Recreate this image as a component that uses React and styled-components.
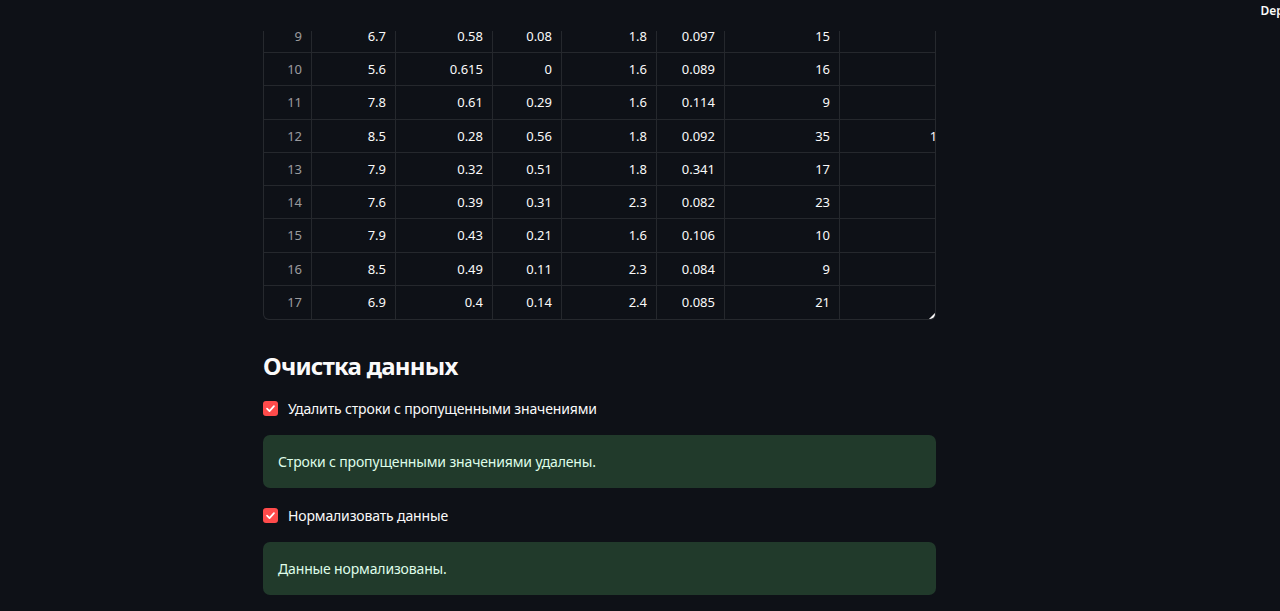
import React from "react";
import styled, { createGlobalStyle } from "styled-components";

const GlobalStyle = createGlobalStyle`
  html, body {
    margin: 0;
    padding: 0;
    background: #0e1117;
  }
  body {
    font-family: "Noto Sans", "Open Sans", sans-serif;
    color: #fafafa;
    overflow: hidden;
  }
`;

const columns = [48, 84, 97, 69, 95, 68, 115, 121];

const rows = [
  [9, "6.7", "0.58", "0.08", "1.8", "0.097", "15", "59"],
  [10, "5.6", "0.615", "0", "1.6", "0.089", "16", "59"],
  [11, "7.8", "0.61", "0.29", "1.6", "0.114", "9", "29"],
  [12, "8.5", "0.28", "0.56", "1.8", "0.092", "35", "103"],
  [13, "7.9", "0.32", "0.51", "1.8", "0.341", "17", "56"],
  [14, "7.6", "0.39", "0.31", "2.3", "0.082", "23", "71"],
  [15, "7.9", "0.43", "0.21", "1.6", "0.106", "10", "37"],
  [16, "8.5", "0.49", "0.11", "2.3", "0.084", "9", "67"],
  [17, "6.9", "0.4", "0.14", "2.4", "0.085", "21", "40"],
];

const Check = () => (
  <CheckBox>
    <svg width="11" height="11" viewBox="0 0 12 12">
      <path
        d="M2.2 6.2 L4.9 8.8 L9.8 3.4"
        fill="none"
        stroke="#fff"
        strokeWidth="1.9"
        strokeLinecap="round"
        strokeLinejoin="round"
      />
    </svg>
  </CheckBox>
);

const App = () => {
  return (
    <>
      <GlobalStyle />
      <Header>
        <DeployButton>Deploy</DeployButton>
      </Header>
      <Main>
        <TableFrame>
          <TableScroll>
            {rows.map((row, r) => (
              <Row key={row[0]} $last={r === rows.length - 1}>
                {row.map((value, c) => (
                  <Cell
                    key={c}
                    $index={c === 0}
                    $lastCol={c === row.length - 1}
                    style={{ width: columns[c] }}
                  >
                    {value}
                  </Cell>
                ))}
              </Row>
            ))}
          </TableScroll>
          <ResizeHandle />
        </TableFrame>

        <Heading>Очистка данных</Heading>

        <CheckRow>
          <Check />
          <CheckLabel>Удалить строки с пропущенными значениями</CheckLabel>
        </CheckRow>
        <Success>Строки с пропущенными значениями удалены.</Success>

        <CheckRow>
          <Check />
          <CheckLabel>Нормализовать данные</CheckLabel>
        </CheckRow>
        <Success>Данные нормализованы.</Success>
      </Main>
    </>
  );
};

const Header = styled.div`
  height: 31px;
  display: flex;
  justify-content: flex-end;
  align-items: flex-start;
  overflow: hidden;
`;

const DeployButton = styled.div`
  margin-top: 2px;
  margin-right: -21px;
  font-size: 12px;
  font-weight: 600;
  color: #fafafa;
  white-space: nowrap;
`;

const Main = styled.div`
  width: 673px;
  margin-left: 263px;
  display: flex;
  flex-direction: column;
`;

const TableFrame = styled.div`
  position: relative;
  border: 1px solid rgba(250, 250, 250, 0.1);
  border-top: none;
  border-radius: 0 0 6px 6px;
  overflow: hidden;
`;

const TableScroll = styled.div`
  margin-top: -11.25px;
  display: flex;
  flex-direction: column;
`;

const Row = styled.div`
  display: flex;
  height: 33.25px;
  box-sizing: border-box;
  border-bottom: ${(p) => (p.$last ? "none" : "1px solid rgba(250, 250, 250, 0.1)")};
`;

const Cell = styled.div`
  flex-shrink: 0;
  box-sizing: border-box;
  display: flex;
  align-items: center;
  justify-content: flex-end;
  padding-right: 9px;
  font-size: 13px;
  color: ${(p) => (p.$index ? "rgba(250, 250, 250, 0.6)" : "#fafafa")};
  border-right: ${(p) => (p.$lastCol ? "none" : "1px solid rgba(250, 250, 250, 0.1)")};
`;

const ResizeHandle = styled.div`
  position: absolute;
  right: 0;
  bottom: 0;
  width: 0;
  height: 0;
  border-left: 6px solid transparent;
  border-bottom: 6px solid #fafafa;
`;

const Heading = styled.h2`
  margin: 30px 0 0;
  font-size: 24px;
  line-height: 31px;
  letter-spacing: -0.75px;
  font-weight: 700;
  color: #fafafa;
`;

const CheckRow = styled.div`
  display: flex;
  align-items: center;
  gap: 10px;
  height: 24px;
  margin-top: 15px;
`;

const CheckBox = styled.div`
  width: 15px;
  height: 15px;
  border-radius: 3px;
  background: #ff4b4b;
  display: flex;
  align-items: center;
  justify-content: center;
`;

const CheckLabel = styled.span`
  font-size: 14px;
  letter-spacing: -0.15px;
  color: #fafafa;
`;

const Success = styled.div`
  margin-top: 15px;
  box-sizing: border-box;
  height: 53px;
  padding: 0 15px;
  display: flex;
  align-items: center;
  border-radius: 7px;
  background: #213a2b;
  color: #dffde9;
  font-size: 14px;
  letter-spacing: -0.15px;
`;

export default App;
